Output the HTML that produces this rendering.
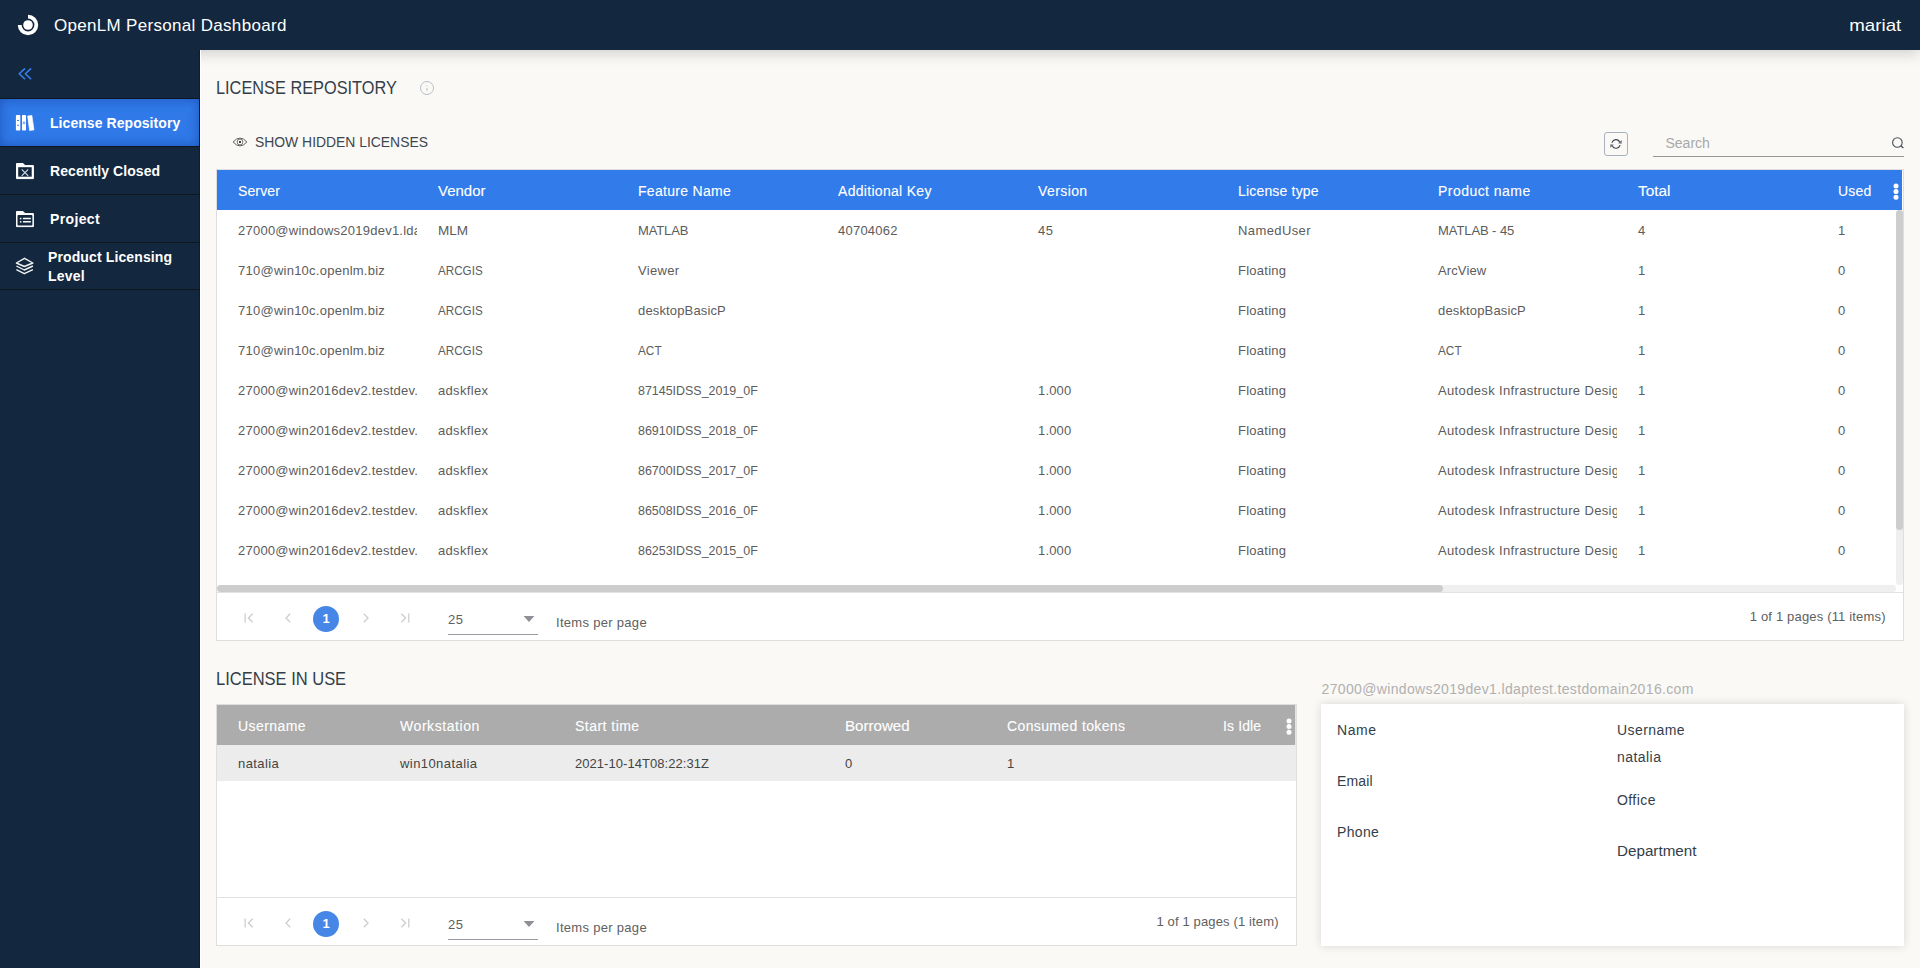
<!DOCTYPE html>
<html lang="en">
<head>
<meta charset="utf-8">
<title>OpenLM Personal Dashboard</title>
<style>
*{box-sizing:border-box;margin:0;padding:0}
html,body{width:1921px;height:968px;overflow:hidden;background:#fff}
body{font-family:"Liberation Sans",sans-serif;color:#555;font-size:13px;position:relative}
.a,#app div,#app svg,#app h1,#app h2,#app span{position:absolute}
#app{position:absolute;left:0;top:0;width:1920px;height:968px;background:#faf9f6;overflow:hidden}
h1,h2{font-weight:normal}
header,nav,main,section,aside{display:contents}
</style>
</head>
<body>
<div id="app">
<header>
<div style="left:0;top:0;width:1920px;height:50px;background:#13273e;box-shadow:0 3px 14px rgba(0,0,0,.18)"></div>
<svg style="left:16px;top:13px" width="24" height="24" viewBox="0 0 24 24"><path d="M12 3.7 A8.3 8.3 0 1 1 3.7 12" fill="none" stroke="#fff" stroke-width="3.8"/><circle cx="12" cy="12" r="4.8" fill="#fff"/></svg>
<h1 style="position:absolute;top:16px;line-height:20px;height:20px;font-size:17px;color:#fff;white-space:nowrap;letter-spacing:0.31px;left:54px;">OpenLM Personal Dashboard</h1>
<div style="position:absolute;top:16px;line-height:20px;height:20px;font-size:17px;color:#fff;white-space:nowrap;transform:scaleX(1.0996);transform-origin:right center;right:18.5px;">mariat</div>
</header>
<nav>
<div style="left:0;top:50px;width:200px;height:918px;background:#13273e;border-right:1px solid #0c1d31"></div><div style="left:200px;top:50px;width:1px;height:918px;background:#fff"></div>
<svg style="left:17px;top:66px" width="16" height="16" viewBox="0 0 16 16"><path d="M7.6 2.9 L2.2 7.8 L7.6 12.7 M13.7 2.9 L8.3 7.8 L13.7 12.7" fill="none" stroke="#3b82f0" stroke-width="1.5" stroke-linecap="round" stroke-linejoin="round"/></svg>
<div style="left:0;top:98px;width:199px;height:1px;background:#10161d"></div>
<section><div style="left:0;top:99px;width:199px;height:47px;background:#2f79e8;box-shadow:inset 0 0 11px rgba(25,70,170,.72)"></div><svg style="left:14px;top:113px" width="22" height="20" viewBox="0 0 22 20"><rect x="1.9" y="2.1" width="4.4" height="15.4" rx=".8" fill="#fff"/><rect x="8" y="2.1" width="4" height="15.4" rx=".8" fill="#fff"/><path d="M13.6 3 L17.9 2.4 L20 16.9 L15.6 17.6 Z" fill="#fff" stroke="#fff" stroke-width=".6" stroke-linejoin="round"/><rect x="3" y="7" width="2" height=".9" fill="#2f79e8"/><rect x="3" y="11.8" width="2" height=".9" fill="#2f79e8"/><rect x="8.6" y="8.6" width="2.6" height="2.6" fill="#8db4f3"/></svg><div style="position:absolute;top:113px;line-height:20px;height:20px;font-size:14px;color:#fff;white-space:nowrap;font-weight:700;letter-spacing:0.06px;left:50px;">License Repository</div><div style="left:0;top:146px;width:199px;height:1px;background:#10161d"></div></section>
<section><svg style="left:14px;top:160px" width="22" height="22" viewBox="0 0 22 22"><path d="M2.5 18.6 V3.5 H9.1 L11 5.6 H19.4 V18.6 Z" fill="#fff" stroke="#fff" stroke-width="1" stroke-linejoin="round"/><rect x="4.2" y="7.2" width="13.5" height="9.5" fill="#13273e"/><path d="M7.7 9.3 L14.2 15.8 M14.2 9.3 L7.7 15.8" stroke="#d5d9de" stroke-width="1.2"/></svg><div style="position:absolute;top:161px;line-height:20px;height:20px;font-size:14px;color:#fff;white-space:nowrap;font-weight:700;letter-spacing:0.08px;left:50px;">Recently Closed</div><div style="left:0;top:194px;width:199px;height:1px;background:#10161d"></div></section>
<section><svg style="left:14px;top:208px" width="22" height="22" viewBox="0 0 22 22"><path d="M2.5 18.6 V3.5 H9.1 L11 5.6 H19.4 V18.6 Z" fill="#fff" stroke="#fff" stroke-width="1" stroke-linejoin="round"/><rect x="3.5" y="7.1" width="14.9" height="10.5" rx=".8" fill="#13273e"/><rect x="8.9" y="9.7" width="8" height="1.6" rx=".6" fill="#fff"/><rect x="8.9" y="13" width="8" height="1.6" rx=".6" fill="#fff"/><rect x="5.9" y="9.8" width="1.5" height="1.5" fill="#fff"/><rect x="5.9" y="13.1" width="1.5" height="1.5" fill="#fff"/></svg><div style="position:absolute;top:209px;line-height:20px;height:20px;font-size:14px;color:#fff;white-space:nowrap;font-weight:700;letter-spacing:0.36px;left:50px;">Project</div><div style="left:0;top:242px;width:199px;height:1px;background:#10161d"></div></section>
<section><svg style="left:14px;top:255px" width="22" height="22" viewBox="0 0 22 22"><path d="M10.5 3.3 L18.9 8 L10.3 11.5 L2.4 8 Z M2.4 11 L10.3 15 L18.9 11 M2.4 14.7 L10.3 18.7 L18.9 14.7" fill="none" stroke="#f1f3f5" stroke-width="1.4" stroke-linejoin="round"/></svg><div style="position:absolute;top:247px;line-height:20px;height:20px;font-size:14px;color:#fff;white-space:nowrap;font-weight:700;letter-spacing:0.12px;left:48px;">Product Licensing</div><div style="position:absolute;top:266px;line-height:20px;height:20px;font-size:14px;color:#fff;white-space:nowrap;font-weight:700;letter-spacing:0.22px;left:48px;">Level</div><div style="left:0;top:289px;width:199px;height:1px;background:#10161d"></div></section>
</nav>
<main>
<section>
<h2 style="position:absolute;top:78px;line-height:20px;height:20px;font-size:18px;color:#333e48;white-space:nowrap;transform:scaleX(0.9067);transform-origin:left center;left:215.7px;">LICENSE REPOSITORY</h2>
<svg style="left:419px;top:80px" width="16" height="16" viewBox="0 0 16 16"><circle cx="8" cy="8" r="6.5" fill="none" stroke="#b7bfca" stroke-width="1"/><rect x="7.3" y="7.8" width="1.3" height="2.8" fill="#c3c9d2"/><rect x="7.3" y="5" width="1.3" height="1" fill="#d3d7dd"/></svg>
<svg style="left:232px;top:135px" width="16" height="14" viewBox="0 0 16 14"><path d="M1.1 7 Q4.4 3.1 8 3.1 Q11.6 3.1 14.9 7 Q11.6 10.9 8 10.9 Q4.4 10.9 1.1 7 Z" fill="none" stroke="#5e5e5e" stroke-width="1"/><circle cx="8" cy="7" r="2.9" fill="none" stroke="#6a6a6a" stroke-width=".9"/><circle cx="8" cy="7" r="1.05" fill="#111"/></svg>
<div style="position:absolute;top:132px;line-height:20px;height:20px;font-size:14px;color:#3d4650;white-space:nowrap;transform:scaleX(0.9926);transform-origin:left center;left:254.6px;">SHOW HIDDEN LICENSES</div>
<div style="left:1604px;top:132px;width:24px;height:24px;border:1px solid #a8b0bd;border-radius:3px"></div>
<svg style="left:1608px;top:136px" width="16" height="16" viewBox="0 0 16 16"><path d="M4.1 6.4 A4.1 4.1 0 0 1 11.5 5.6 M11.9 9.5 A4.1 4.1 0 0 1 4.5 10.3" fill="none" stroke="#3d4450" stroke-width="1.15" stroke-linecap="round"/><path d="M13.8 4.1 L13.6 7.7 L10 7.2 Z M2.2 11.8 L2.4 8.2 L6 8.7 Z" fill="#6b717b"/></svg>
<div style="left:1653px;top:156px;width:251px;height:1px;background:#979797"></div>
<div style="position:absolute;top:133px;line-height:20px;height:20px;font-size:14px;color:#a8a8a8;white-space:nowrap;left:1665.5px;">Search</div>
<svg style="left:1890px;top:135px" width="16" height="16" viewBox="0 0 16 16"><circle cx="7.4" cy="7.5" r="4.8" fill="none" stroke="#4a505a" stroke-width="1.1"/><path d="M10.8 10.8 L13.4 13" stroke="#4a505a" stroke-width="1.3"/></svg>
<div style="left:216px;top:169px;width:1688px;height:472px;background:#fff;border:1px solid #dedede"></div>
<div style="left:217px;top:170px;width:1685px;height:40px;background:#317bea"></div>
<div style="position:absolute;top:181px;line-height:20px;height:20px;font-size:14px;color:#fff;white-space:nowrap;letter-spacing:0.12px;left:238px;-webkit-text-stroke:.12px #fff;">Server</div><div style="position:absolute;top:181px;line-height:20px;height:20px;font-size:14px;color:#fff;white-space:nowrap;transform:scaleX(1.0708);transform-origin:left center;left:438px;-webkit-text-stroke:.12px #fff;">Vendor</div><div style="position:absolute;top:181px;line-height:20px;height:20px;font-size:14px;color:#fff;white-space:nowrap;letter-spacing:0.3px;left:638px;-webkit-text-stroke:.12px #fff;">Feature Name</div><div style="position:absolute;top:181px;line-height:20px;height:20px;font-size:14px;color:#fff;white-space:nowrap;letter-spacing:0.3px;left:838px;-webkit-text-stroke:.12px #fff;">Additional Key</div><div style="position:absolute;top:181px;line-height:20px;height:20px;font-size:14px;color:#fff;white-space:nowrap;letter-spacing:0.41px;left:1038px;-webkit-text-stroke:.12px #fff;">Version</div><div style="position:absolute;top:181px;line-height:20px;height:20px;font-size:14px;color:#fff;white-space:nowrap;letter-spacing:0.18px;left:1238px;-webkit-text-stroke:.12px #fff;">License type</div><div style="position:absolute;top:181px;line-height:20px;height:20px;font-size:14px;color:#fff;white-space:nowrap;letter-spacing:0.46px;left:1438px;-webkit-text-stroke:.12px #fff;">Product name</div><div style="position:absolute;top:181px;line-height:20px;height:20px;font-size:14px;color:#fff;white-space:nowrap;transform:scaleX(1.0967);transform-origin:left center;left:1638px;-webkit-text-stroke:.12px #fff;">Total</div><div style="position:absolute;top:181px;line-height:20px;height:20px;font-size:14px;color:#fff;white-space:nowrap;letter-spacing:0.21px;left:1838px;-webkit-text-stroke:.12px #fff;">Used</div>
<svg style="left:1892px;top:182.4px" width="8" height="20" viewBox="0 0 8 20"><circle cx="4" cy="4" r="2.5" fill="#fff"/><circle cx="4" cy="9.6" r="2.5" fill="#fff"/><circle cx="4" cy="15.2" r="2.5" fill="#fff"/></svg>
<div style="position:absolute;top:221px;line-height:20px;height:20px;font-size:13px;color:#5c5c5c;white-space:nowrap;letter-spacing:0.24px;left:238px;width:179px;overflow:hidden;">27000@windows2019dev1.ldaptest.testdomain2016.com</div><div style="position:absolute;top:221px;line-height:20px;height:20px;font-size:13px;color:#5c5c5c;white-space:nowrap;transform:scaleX(1.0443);transform-origin:left center;left:438px;">MLM</div><div style="position:absolute;top:221px;line-height:20px;height:20px;font-size:13px;color:#5c5c5c;white-space:nowrap;letter-spacing:-0.12px;left:638px;">MATLAB</div><div style="position:absolute;top:221px;line-height:20px;height:20px;font-size:13px;color:#5c5c5c;white-space:nowrap;letter-spacing:0.23px;left:838px;">40704062</div><div style="position:absolute;top:221px;line-height:20px;height:20px;font-size:13px;color:#5c5c5c;white-space:nowrap;letter-spacing:0.41px;left:1038px;">45</div><div style="position:absolute;top:221px;line-height:20px;height:20px;font-size:13px;color:#5c5c5c;white-space:nowrap;letter-spacing:0.4px;left:1238px;">NamedUser</div><div style="position:absolute;top:221px;line-height:20px;height:20px;font-size:13px;color:#5c5c5c;white-space:nowrap;letter-spacing:-0.08px;left:1438px;">MATLAB - 45</div><div style="position:absolute;top:221px;line-height:20px;height:20px;font-size:13px;color:#5c5c5c;white-space:nowrap;letter-spacing:0.2px;left:1638px;">4</div><div style="position:absolute;top:221px;line-height:20px;height:20px;font-size:13px;color:#5c5c5c;white-space:nowrap;letter-spacing:0.2px;left:1838px;">1</div>
<div style="position:absolute;top:261px;line-height:20px;height:20px;font-size:13px;color:#5c5c5c;white-space:nowrap;letter-spacing:0.25px;left:238px;width:179px;overflow:hidden;">710@win10c.openlm.biz</div><div style="position:absolute;top:261px;line-height:20px;height:20px;font-size:13px;color:#5c5c5c;white-space:nowrap;transform:scaleX(0.8959);transform-origin:left center;left:438px;">ARCGIS</div><div style="position:absolute;top:261px;line-height:20px;height:20px;font-size:13px;color:#5c5c5c;white-space:nowrap;letter-spacing:0.3px;left:638px;">Viewer</div><div style="position:absolute;top:261px;line-height:20px;height:20px;font-size:13px;color:#5c5c5c;white-space:nowrap;letter-spacing:0.25px;left:1238px;">Floating</div><div style="position:absolute;top:261px;line-height:20px;height:20px;font-size:13px;color:#5c5c5c;white-space:nowrap;letter-spacing:0.12px;left:1438px;">ArcView</div><div style="position:absolute;top:261px;line-height:20px;height:20px;font-size:13px;color:#5c5c5c;white-space:nowrap;letter-spacing:0.2px;left:1638px;">1</div><div style="position:absolute;top:261px;line-height:20px;height:20px;font-size:13px;color:#5c5c5c;white-space:nowrap;letter-spacing:0.2px;left:1838px;">0</div>
<div style="position:absolute;top:301px;line-height:20px;height:20px;font-size:13px;color:#5c5c5c;white-space:nowrap;letter-spacing:0.25px;left:238px;width:179px;overflow:hidden;">710@win10c.openlm.biz</div><div style="position:absolute;top:301px;line-height:20px;height:20px;font-size:13px;color:#5c5c5c;white-space:nowrap;transform:scaleX(0.8959);transform-origin:left center;left:438px;">ARCGIS</div><div style="position:absolute;top:301px;line-height:20px;height:20px;font-size:13px;color:#5c5c5c;white-space:nowrap;letter-spacing:0.15px;left:638px;">desktopBasicP</div><div style="position:absolute;top:301px;line-height:20px;height:20px;font-size:13px;color:#5c5c5c;white-space:nowrap;letter-spacing:0.25px;left:1238px;">Floating</div><div style="position:absolute;top:301px;line-height:20px;height:20px;font-size:13px;color:#5c5c5c;white-space:nowrap;letter-spacing:0.15px;left:1438px;">desktopBasicP</div><div style="position:absolute;top:301px;line-height:20px;height:20px;font-size:13px;color:#5c5c5c;white-space:nowrap;letter-spacing:0.2px;left:1638px;">1</div><div style="position:absolute;top:301px;line-height:20px;height:20px;font-size:13px;color:#5c5c5c;white-space:nowrap;letter-spacing:0.2px;left:1838px;">0</div>
<div style="position:absolute;top:341px;line-height:20px;height:20px;font-size:13px;color:#5c5c5c;white-space:nowrap;letter-spacing:0.25px;left:238px;width:179px;overflow:hidden;">710@win10c.openlm.biz</div><div style="position:absolute;top:341px;line-height:20px;height:20px;font-size:13px;color:#5c5c5c;white-space:nowrap;transform:scaleX(0.8959);transform-origin:left center;left:438px;">ARCGIS</div><div style="position:absolute;top:341px;line-height:20px;height:20px;font-size:13px;color:#5c5c5c;white-space:nowrap;transform:scaleX(0.9069);transform-origin:left center;left:638px;">ACT</div><div style="position:absolute;top:341px;line-height:20px;height:20px;font-size:13px;color:#5c5c5c;white-space:nowrap;letter-spacing:0.25px;left:1238px;">Floating</div><div style="position:absolute;top:341px;line-height:20px;height:20px;font-size:13px;color:#5c5c5c;white-space:nowrap;transform:scaleX(0.9069);transform-origin:left center;left:1438px;">ACT</div><div style="position:absolute;top:341px;line-height:20px;height:20px;font-size:13px;color:#5c5c5c;white-space:nowrap;letter-spacing:0.2px;left:1638px;">1</div><div style="position:absolute;top:341px;line-height:20px;height:20px;font-size:13px;color:#5c5c5c;white-space:nowrap;letter-spacing:0.2px;left:1838px;">0</div>
<div style="position:absolute;top:381px;line-height:20px;height:20px;font-size:13px;color:#5c5c5c;white-space:nowrap;letter-spacing:0.23px;left:238px;width:179px;overflow:hidden;">27000@win2016dev2.testdev.com</div><div style="position:absolute;top:381px;line-height:20px;height:20px;font-size:13px;color:#5c5c5c;white-space:nowrap;letter-spacing:0.32px;left:438px;">adskflex</div><div style="position:absolute;top:381px;line-height:20px;height:20px;font-size:13px;color:#5c5c5c;white-space:nowrap;transform:scaleX(0.9576);transform-origin:left center;left:638px;">87145IDSS_2019_0F</div><div style="position:absolute;top:381px;line-height:20px;height:20px;font-size:13px;color:#5c5c5c;white-space:nowrap;letter-spacing:0.15px;left:1038px;">1.000</div><div style="position:absolute;top:381px;line-height:20px;height:20px;font-size:13px;color:#5c5c5c;white-space:nowrap;letter-spacing:0.25px;left:1238px;">Floating</div><div style="position:absolute;top:381px;line-height:20px;height:20px;font-size:13px;color:#5c5c5c;white-space:nowrap;letter-spacing:0.35px;left:1438px;width:179px;overflow:hidden;">Autodesk Infrastructure Design Suite Standard 2019</div><div style="position:absolute;top:381px;line-height:20px;height:20px;font-size:13px;color:#5c5c5c;white-space:nowrap;letter-spacing:0.2px;left:1638px;">1</div><div style="position:absolute;top:381px;line-height:20px;height:20px;font-size:13px;color:#5c5c5c;white-space:nowrap;letter-spacing:0.2px;left:1838px;">0</div>
<div style="position:absolute;top:421px;line-height:20px;height:20px;font-size:13px;color:#5c5c5c;white-space:nowrap;letter-spacing:0.23px;left:238px;width:179px;overflow:hidden;">27000@win2016dev2.testdev.com</div><div style="position:absolute;top:421px;line-height:20px;height:20px;font-size:13px;color:#5c5c5c;white-space:nowrap;letter-spacing:0.32px;left:438px;">adskflex</div><div style="position:absolute;top:421px;line-height:20px;height:20px;font-size:13px;color:#5c5c5c;white-space:nowrap;transform:scaleX(0.9576);transform-origin:left center;left:638px;">86910IDSS_2018_0F</div><div style="position:absolute;top:421px;line-height:20px;height:20px;font-size:13px;color:#5c5c5c;white-space:nowrap;letter-spacing:0.15px;left:1038px;">1.000</div><div style="position:absolute;top:421px;line-height:20px;height:20px;font-size:13px;color:#5c5c5c;white-space:nowrap;letter-spacing:0.25px;left:1238px;">Floating</div><div style="position:absolute;top:421px;line-height:20px;height:20px;font-size:13px;color:#5c5c5c;white-space:nowrap;letter-spacing:0.35px;left:1438px;width:179px;overflow:hidden;">Autodesk Infrastructure Design Suite Standard 2018</div><div style="position:absolute;top:421px;line-height:20px;height:20px;font-size:13px;color:#5c5c5c;white-space:nowrap;letter-spacing:0.2px;left:1638px;">1</div><div style="position:absolute;top:421px;line-height:20px;height:20px;font-size:13px;color:#5c5c5c;white-space:nowrap;letter-spacing:0.2px;left:1838px;">0</div>
<div style="position:absolute;top:461px;line-height:20px;height:20px;font-size:13px;color:#5c5c5c;white-space:nowrap;letter-spacing:0.23px;left:238px;width:179px;overflow:hidden;">27000@win2016dev2.testdev.com</div><div style="position:absolute;top:461px;line-height:20px;height:20px;font-size:13px;color:#5c5c5c;white-space:nowrap;letter-spacing:0.32px;left:438px;">adskflex</div><div style="position:absolute;top:461px;line-height:20px;height:20px;font-size:13px;color:#5c5c5c;white-space:nowrap;transform:scaleX(0.9576);transform-origin:left center;left:638px;">86700IDSS_2017_0F</div><div style="position:absolute;top:461px;line-height:20px;height:20px;font-size:13px;color:#5c5c5c;white-space:nowrap;letter-spacing:0.15px;left:1038px;">1.000</div><div style="position:absolute;top:461px;line-height:20px;height:20px;font-size:13px;color:#5c5c5c;white-space:nowrap;letter-spacing:0.25px;left:1238px;">Floating</div><div style="position:absolute;top:461px;line-height:20px;height:20px;font-size:13px;color:#5c5c5c;white-space:nowrap;letter-spacing:0.35px;left:1438px;width:179px;overflow:hidden;">Autodesk Infrastructure Design Suite Standard 2017</div><div style="position:absolute;top:461px;line-height:20px;height:20px;font-size:13px;color:#5c5c5c;white-space:nowrap;letter-spacing:0.2px;left:1638px;">1</div><div style="position:absolute;top:461px;line-height:20px;height:20px;font-size:13px;color:#5c5c5c;white-space:nowrap;letter-spacing:0.2px;left:1838px;">0</div>
<div style="position:absolute;top:501px;line-height:20px;height:20px;font-size:13px;color:#5c5c5c;white-space:nowrap;letter-spacing:0.23px;left:238px;width:179px;overflow:hidden;">27000@win2016dev2.testdev.com</div><div style="position:absolute;top:501px;line-height:20px;height:20px;font-size:13px;color:#5c5c5c;white-space:nowrap;letter-spacing:0.32px;left:438px;">adskflex</div><div style="position:absolute;top:501px;line-height:20px;height:20px;font-size:13px;color:#5c5c5c;white-space:nowrap;transform:scaleX(0.9576);transform-origin:left center;left:638px;">86508IDSS_2016_0F</div><div style="position:absolute;top:501px;line-height:20px;height:20px;font-size:13px;color:#5c5c5c;white-space:nowrap;letter-spacing:0.15px;left:1038px;">1.000</div><div style="position:absolute;top:501px;line-height:20px;height:20px;font-size:13px;color:#5c5c5c;white-space:nowrap;letter-spacing:0.25px;left:1238px;">Floating</div><div style="position:absolute;top:501px;line-height:20px;height:20px;font-size:13px;color:#5c5c5c;white-space:nowrap;letter-spacing:0.35px;left:1438px;width:179px;overflow:hidden;">Autodesk Infrastructure Design Suite Standard 2016</div><div style="position:absolute;top:501px;line-height:20px;height:20px;font-size:13px;color:#5c5c5c;white-space:nowrap;letter-spacing:0.2px;left:1638px;">1</div><div style="position:absolute;top:501px;line-height:20px;height:20px;font-size:13px;color:#5c5c5c;white-space:nowrap;letter-spacing:0.2px;left:1838px;">0</div>
<div style="position:absolute;top:541px;line-height:20px;height:20px;font-size:13px;color:#5c5c5c;white-space:nowrap;letter-spacing:0.23px;left:238px;width:179px;overflow:hidden;">27000@win2016dev2.testdev.com</div><div style="position:absolute;top:541px;line-height:20px;height:20px;font-size:13px;color:#5c5c5c;white-space:nowrap;letter-spacing:0.32px;left:438px;">adskflex</div><div style="position:absolute;top:541px;line-height:20px;height:20px;font-size:13px;color:#5c5c5c;white-space:nowrap;transform:scaleX(0.9576);transform-origin:left center;left:638px;">86253IDSS_2015_0F</div><div style="position:absolute;top:541px;line-height:20px;height:20px;font-size:13px;color:#5c5c5c;white-space:nowrap;letter-spacing:0.15px;left:1038px;">1.000</div><div style="position:absolute;top:541px;line-height:20px;height:20px;font-size:13px;color:#5c5c5c;white-space:nowrap;letter-spacing:0.25px;left:1238px;">Floating</div><div style="position:absolute;top:541px;line-height:20px;height:20px;font-size:13px;color:#5c5c5c;white-space:nowrap;letter-spacing:0.35px;left:1438px;width:179px;overflow:hidden;">Autodesk Infrastructure Design Suite Standard 2015</div><div style="position:absolute;top:541px;line-height:20px;height:20px;font-size:13px;color:#5c5c5c;white-space:nowrap;letter-spacing:0.2px;left:1638px;">1</div><div style="position:absolute;top:541px;line-height:20px;height:20px;font-size:13px;color:#5c5c5c;white-space:nowrap;letter-spacing:0.2px;left:1838px;">0</div>
<div style="left:1896px;top:210px;width:7px;height:375px;background:#efefef;border-radius:4px"></div><div style="left:1896px;top:210px;width:7px;height:320px;background:#cdcdcd;border-radius:4px"></div><div style="left:217px;top:585px;width:1679px;height:7px;background:#efefef;border-radius:4px"></div><div style="left:217px;top:585px;width:1226px;height:7px;background:#cdcdcd;border-radius:4px"></div><div style="left:217px;top:592px;width:1686px;height:1px;background:#e2e2e2"></div>
<svg style="left:241.6px;top:611px" width="14" height="14" viewBox="0 0 14 14"><path d="M3.15 2.6 V11.4 M10.6 2.8 L6.4 7 L10.6 11.2" fill="none" stroke="#cdcdcd" stroke-width="1.3"/></svg><svg style="left:280.6px;top:611px" width="14" height="14" viewBox="0 0 14 14"><path d="M9.2 2.8 L5 7 L9.2 11.2" fill="none" stroke="#cdcdcd" stroke-width="1.3"/></svg><div style="left:313px;top:605.5px;width:26px;height:26px;border-radius:13px;background:#4686e6"></div><div style="position:absolute;top:609px;line-height:20px;height:20px;font-size:13px;color:#fff;white-space:nowrap;font-weight:700;letter-spacing:0.2px;left:322.4px;">1</div><svg style="left:358.6px;top:611px" width="14" height="14" viewBox="0 0 14 14"><path d="M4.8 2.8 L9 7 L4.8 11.2" fill="none" stroke="#cdcdcd" stroke-width="1.3"/></svg><svg style="left:397.6px;top:611px" width="14" height="14" viewBox="0 0 14 14"><path d="M10.8 2.6 V11.4 M3.4 2.8 L7.6 7 L3.4 11.2" fill="none" stroke="#cdcdcd" stroke-width="1.3"/></svg><div style="position:absolute;top:610px;line-height:20px;height:20px;font-size:13px;color:#606060;white-space:nowrap;letter-spacing:0.41px;left:448px;">25</div><svg style="left:523px;top:616px" width="12" height="7" viewBox="0 0 12 7"><path d="M0.6 0 H11.4 L6 6 Z" fill="#8e9096"/></svg><div style="left:448px;top:634px;width:90px;height:1px;background:#9a9ca3"></div><div style="position:absolute;top:613px;line-height:20px;height:20px;font-size:13px;color:#606060;white-space:nowrap;letter-spacing:0.3px;left:556px;">Items per page</div><div style="position:absolute;top:607px;line-height:20px;height:20px;font-size:13px;color:#606060;white-space:nowrap;letter-spacing:0.17px;margin-right:-0.17px;right:34.5px;">1 of 1 pages (11 items)</div>
</section>
<section>
<h2 style="position:absolute;top:669px;line-height:20px;height:20px;font-size:18px;color:#333e48;white-space:nowrap;transform:scaleX(0.9161);transform-origin:left center;left:215.8px;">LICENSE IN USE</h2>
<div style="left:216px;top:704px;width:1081px;height:242px;background:#fff;border:1px solid #dedede"></div>
<div style="left:217px;top:705px;width:1079px;height:40px;background:#e4e4e4"></div><div style="left:217px;top:705px;width:1078px;height:40px;background:#acacac"></div>
<div style="left:217px;top:745px;width:1079px;height:36px;background:#ececec"></div>
<div style="position:absolute;top:716px;line-height:20px;height:20px;font-size:14px;color:#fff;white-space:nowrap;letter-spacing:0.44px;left:238px;-webkit-text-stroke:.12px #fff;">Username</div><div style="position:absolute;top:716px;line-height:20px;height:20px;font-size:14px;color:#fff;white-space:nowrap;letter-spacing:0.57px;left:400px;-webkit-text-stroke:.12px #fff;">Workstation</div><div style="position:absolute;top:716px;line-height:20px;height:20px;font-size:14px;color:#fff;white-space:nowrap;letter-spacing:0.47px;left:575px;-webkit-text-stroke:.12px #fff;">Start time</div><div style="position:absolute;top:716px;line-height:20px;height:20px;font-size:14px;color:#fff;white-space:nowrap;transform:scaleX(1.0782);transform-origin:left center;left:845px;-webkit-text-stroke:.12px #fff;">Borrowed</div><div style="position:absolute;top:716px;line-height:20px;height:20px;font-size:14px;color:#fff;white-space:nowrap;letter-spacing:0.37px;left:1007px;-webkit-text-stroke:.12px #fff;">Consumed tokens</div><div style="position:absolute;top:716px;line-height:20px;height:20px;font-size:14px;color:#fff;white-space:nowrap;letter-spacing:0.12px;left:1223px;-webkit-text-stroke:.12px #fff;">Is Idle</div>
<svg style="left:1285px;top:717.4px" width="8" height="20" viewBox="0 0 8 20"><circle cx="4" cy="4" r="2.5" fill="#fff"/><circle cx="4" cy="9.6" r="2.5" fill="#fff"/><circle cx="4" cy="15.2" r="2.5" fill="#fff"/></svg>
<div style="position:absolute;top:754px;line-height:20px;height:20px;font-size:13px;color:#444;white-space:nowrap;letter-spacing:0.42px;left:238px;">natalia</div><div style="position:absolute;top:754px;line-height:20px;height:20px;font-size:13px;color:#444;white-space:nowrap;letter-spacing:0.43px;left:400px;">win10natalia</div><div style="position:absolute;top:754px;line-height:20px;height:20px;font-size:13px;color:#444;white-space:nowrap;letter-spacing:0.05px;left:575px;">2021-10-14T08:22:31Z</div><div style="position:absolute;top:754px;line-height:20px;height:20px;font-size:13px;color:#444;white-space:nowrap;letter-spacing:0.2px;left:845px;">0</div><div style="position:absolute;top:754px;line-height:20px;height:20px;font-size:13px;color:#444;white-space:nowrap;letter-spacing:0.2px;left:1007px;">1</div>
<div style="left:217px;top:897px;width:1079px;height:1px;background:#e2e2e2"></div>
<svg style="left:241.6px;top:916px" width="14" height="14" viewBox="0 0 14 14"><path d="M3.15 2.6 V11.4 M10.6 2.8 L6.4 7 L10.6 11.2" fill="none" stroke="#cdcdcd" stroke-width="1.3"/></svg><svg style="left:280.6px;top:916px" width="14" height="14" viewBox="0 0 14 14"><path d="M9.2 2.8 L5 7 L9.2 11.2" fill="none" stroke="#cdcdcd" stroke-width="1.3"/></svg><div style="left:313px;top:910.5px;width:26px;height:26px;border-radius:13px;background:#4686e6"></div><div style="position:absolute;top:914px;line-height:20px;height:20px;font-size:13px;color:#fff;white-space:nowrap;font-weight:700;letter-spacing:0.2px;left:322.4px;">1</div><svg style="left:358.6px;top:916px" width="14" height="14" viewBox="0 0 14 14"><path d="M4.8 2.8 L9 7 L4.8 11.2" fill="none" stroke="#cdcdcd" stroke-width="1.3"/></svg><svg style="left:397.6px;top:916px" width="14" height="14" viewBox="0 0 14 14"><path d="M10.8 2.6 V11.4 M3.4 2.8 L7.6 7 L3.4 11.2" fill="none" stroke="#cdcdcd" stroke-width="1.3"/></svg><div style="position:absolute;top:915px;line-height:20px;height:20px;font-size:13px;color:#606060;white-space:nowrap;letter-spacing:0.41px;left:448px;">25</div><svg style="left:523px;top:921px" width="12" height="7" viewBox="0 0 12 7"><path d="M0.6 0 H11.4 L6 6 Z" fill="#8e9096"/></svg><div style="left:448px;top:939px;width:90px;height:1px;background:#9a9ca3"></div><div style="position:absolute;top:918px;line-height:20px;height:20px;font-size:13px;color:#606060;white-space:nowrap;letter-spacing:0.3px;left:556px;">Items per page</div><div style="position:absolute;top:912px;line-height:20px;height:20px;font-size:13px;color:#606060;white-space:nowrap;letter-spacing:0.14px;margin-right:-0.14px;right:641.5px;">1 of 1 pages (1 item)</div>
</section>
<aside>
<div style="position:absolute;top:679px;line-height:20px;height:20px;font-size:14px;color:#b0b0b0;white-space:nowrap;letter-spacing:0.35px;left:1321.5px;">27000@windows2019dev1.ldaptest.testdomain2016.com</div>
<div style="left:1321px;top:704px;width:583px;height:242px;background:#fff;box-shadow:0 0 9px rgba(0,0,0,.14)"></div>
<div style="position:absolute;top:720px;line-height:20px;height:20px;font-size:14px;color:#343e49;white-space:nowrap;letter-spacing:0.6px;left:1337px;">Name</div><div style="position:absolute;top:771px;line-height:20px;height:20px;font-size:14px;color:#343e49;white-space:nowrap;letter-spacing:0.14px;left:1337px;">Email</div><div style="position:absolute;top:822px;line-height:20px;height:20px;font-size:14px;color:#343e49;white-space:nowrap;letter-spacing:0.35px;left:1337px;">Phone</div>
<div style="position:absolute;top:720px;line-height:20px;height:20px;font-size:14px;color:#343e49;white-space:nowrap;letter-spacing:0.44px;left:1617px;">Username</div><div style="position:absolute;top:747px;line-height:20px;height:20px;font-size:14px;color:#343e49;white-space:nowrap;letter-spacing:0.45px;left:1617px;">natalia</div><div style="position:absolute;top:790px;line-height:20px;height:20px;font-size:14px;color:#343e49;white-space:nowrap;letter-spacing:0.42px;left:1617px;">Office</div><div style="position:absolute;top:841px;line-height:20px;height:20px;font-size:14px;color:#343e49;white-space:nowrap;transform:scaleX(1.0865);transform-origin:left center;left:1617px;">Department</div>
</aside>
</main>
</div>
</body>
</html>
